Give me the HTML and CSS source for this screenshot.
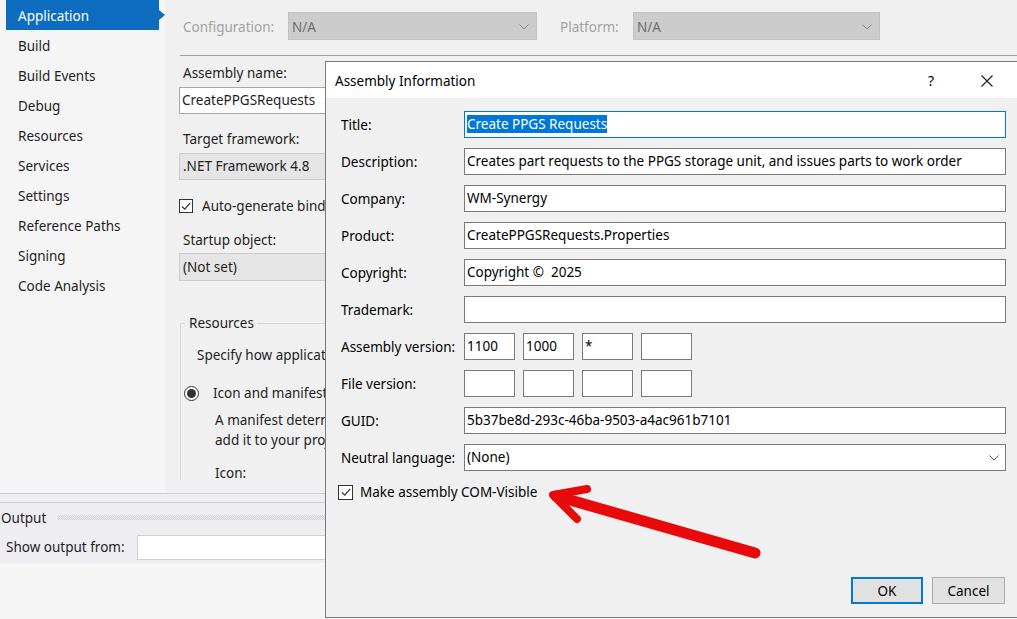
FILE: index.html
```html
<!DOCTYPE html>
<html lang="en">
<head>
<meta charset="utf-8">
<title>Assembly Information</title>
<link rel="stylesheet" href="styles.css">
</head>
<body>
<div class="page">
  <div class="designer">
    <nav class="sidebar">
      <div class="nav-item active">Application</div>
      <div class="nav-item">Build</div>
      <div class="nav-item">Build Events</div>
      <div class="nav-item">Debug</div>
      <div class="nav-item">Resources</div>
      <div class="nav-item">Services</div>
      <div class="nav-item">Settings</div>
      <div class="nav-item">Reference Paths</div>
      <div class="nav-item">Signing</div>
      <div class="nav-item">Code Analysis</div>
    </nav>
    <section class="main">
      <div class="config-row">
        <span class="cfg-label cfg-label-config">Configuration:</span>
        <div class="cfg-select cfg-select-config"><span>N/A</span><svg class="chev" width="10" height="6" viewBox="0 0 10 6"><polyline points="0.5,0.5 5,5 9.5,0.5" fill="none" stroke="#8a8a8a" stroke-width="1"/></svg></div>
        <span class="cfg-label cfg-label-platform">Platform:</span>
        <div class="cfg-select cfg-select-platform"><span>N/A</span><svg class="chev" width="10" height="6" viewBox="0 0 10 6"><polyline points="0.5,0.5 5,5 9.5,0.5" fill="none" stroke="#8a8a8a" stroke-width="1"/></svg></div>
      </div>
      <div class="separator"></div>
      <div class="form">
        <div class="field-label">Assembly name:</div>
        <div class="text-box">CreatePPGSRequests</div>
        <div class="field-label gap-lg">Target framework:</div>
        <div class="combo">.NET Framework 4.8</div>
        <div class="check-row"><span class="checkbox"><svg width="12" height="12" viewBox="0 0 12 12"><polyline points="2,6.5 4.8,9.2 10.2,2.8" fill="none" stroke="#333" stroke-width="1.2"/></svg></span><span class="clip-text">Auto-generate binding redirects</span></div>
        <div class="field-label gap-md">Startup object:</div>
        <div class="combo combo-tight">(Not set)</div>
        <fieldset class="group">
          <legend>Resources</legend>
          <div class="group-text">Specify how application resources will be managed:</div>
          <div class="radio-row"><span class="radio"><span class="radio-dot"></span></span><span class="clip-text">Icon and manifest</span></div>
          <div class="group-desc">A manifest determines specific settings for an application.</div>
          <div class="group-desc group-desc-2">add it to your project and then select it from the list below.</div>
          <div class="group-icon">Icon:</div>
        </fieldset>
      </div>
    </section>
  </div>
  <div class="output">
    <div class="output-splitter"></div>
    <div class="output-header"><span class="output-title">Output</span><div class="grip"></div></div>
    <div class="output-source"><span>Show output from:</span><div class="output-combo"></div></div>
  </div>

  <div class="dialog">
    <div class="dialog-titlebar">
      <span class="dialog-title">Assembly Information</span>
      <span class="dialog-help">?</span>
      <span class="dialog-close"><svg width="12" height="12" viewBox="0 0 12 12"><path d="M0.5 0.5 L11.5 11.5 M11.5 0.5 L0.5 11.5" stroke="#1a1a1a" stroke-width="1.1" fill="none"/></svg></span>
    </div>
    <div class="dialog-body">
      <div class="info-grid">
        <label class="info-label">Title:</label>
        <div class="info-box focused"><span class="selected">Create PPGS Requests</span></div>
        <label class="info-label">Description:</label>
        <div class="info-box">Creates part requests to the PPGS storage unit, and issues parts to work order</div>
        <label class="info-label">Company:</label>
        <div class="info-box">WM-Synergy</div>
        <label class="info-label">Product:</label>
        <div class="info-box">CreatePPGSRequests.Properties</div>
        <label class="info-label">Copyright:</label>
        <div class="info-box">Copyright ©&nbsp; 2025</div>
        <label class="info-label">Trademark:</label>
        <div class="info-box"></div>
        <label class="info-label">Assembly version:</label>
        <div class="version-row">
          <div class="info-box version-box">1100</div>
          <div class="info-box version-box">1000</div>
          <div class="info-box version-box">*</div>
          <div class="info-box version-box"></div>
        </div>
        <label class="info-label">File version:</label>
        <div class="version-row">
          <div class="info-box version-box"></div>
          <div class="info-box version-box"></div>
          <div class="info-box version-box"></div>
          <div class="info-box version-box"></div>
        </div>
        <label class="info-label">GUID:</label>
        <div class="info-box">5b37be8d-293c-46ba-9503-a4ac961b7101</div>
        <label class="info-label">Neutral language:</label>
        <div class="info-box info-combo"><span>(None)</span><svg class="chev" width="10" height="6" viewBox="0 0 10 6"><polyline points="0.5,0.5 5,5 9.5,0.5" fill="none" stroke="#555" stroke-width="1"/></svg></div>
      </div>
      <div class="com-row"><span class="checkbox"><svg width="12" height="12" viewBox="0 0 12 12"><polyline points="2,6.5 4.8,9.2 10.2,2.8" fill="none" stroke="#333" stroke-width="1.2"/></svg></span><span>Make assembly COM-Visible</span></div>
      <div class="button-row">
        <button class="btn btn-default">OK</button>
        <button class="btn btn-cancel">Cancel</button>
      </div>
    </div>
  </div>

  <svg class="arrow" width="1017" height="619" viewBox="0 0 1017 619">
    <line x1="755" y1="553" x2="556" y2="496" stroke="#e80a0a" stroke-width="11" stroke-linecap="round"/>
    <polyline points="587,489 553,495 577,519" fill="none" stroke="#e80a0a" stroke-width="8" stroke-linecap="round" stroke-linejoin="round"/>
  </svg>
</div>
</body>
</html>
```

FILE: styles.css
```css
* { box-sizing: border-box; }

html, body {
  margin: 0;
  padding: 0;
}

body {
  font-family: "Noto Sans", "Open Sans", sans-serif;
  font-size: 13.5px;
  color: #1e1e1e;
  background: #f5f5f5;
}

.page {
  position: relative;
  width: 1017px;
  height: 619px;
  overflow: hidden;
  background: #f5f5f5;
}

/* ---------- designer area ---------- */
.designer {
  display: flex;
  height: 493px;
}

.sidebar {
  width: 165px;
  flex: none;
  background: #f5f5f5;
  padding-left: 6px;
}

.nav-item {
  width: 153px;
  height: 30px;
  padding-top: 2px;
  line-height: 28px;
  padding-left: 12px;
  white-space: nowrap;
}

.nav-item.active {
  position: relative;
  background: #0c6dc0;
  color: #ffffff;
}

.nav-item.active::after {
  content: "";
  position: absolute;
  right: -6px;
  top: 10px;
  border-left: 6px solid #0c6dc0;
  border-top: 5px solid transparent;
  border-bottom: 5px solid transparent;
}

.main {
  flex: 1;
  background: #f0f0f0;
  padding-top: 12px;
  overflow: hidden;
}

.config-row {
  display: flex;
  align-items: center;
  height: 28px;
  padding-left: 14px;
  padding-top: 1px;
}

.cfg-label {
  color: #a2a2a2;
  padding-left: 4px;
  white-space: nowrap;
}

.cfg-label-config { width: 109px; }
.cfg-label-platform { width: 73px; margin-left: 23px; padding-left: 0; }

.cfg-select {
  height: 28px;
  margin-top: -1px;
  background: #cccccc;
  border: 1px solid #c2c2c2;
  display: flex;
  align-items: center;
  justify-content: space-between;
  padding: 1px 7px 0 3px;
  color: #6e6e6e;
}

.cfg-select-config { width: 249px; }
.cfg-select-platform { width: 247px; }

.chev { display: block; }

.separator {
  height: 1px;
  background: #a0a0a0;
  margin: 15px 0 0 15px;
}

.form {
  padding-left: 14px;
  width: 161px;
  overflow: hidden;
}

.field-label {
  line-height: 20px;
  margin-top: 7px;
  padding-left: 4px;
  white-space: nowrap;
}

.field-label.gap-lg { margin-top: 15px; }
.field-label.gap-md { margin-top: 14px; }

.text-box {
  margin-top: 4px;
  height: 27px;
  width: 147px;
  background: #ffffff;
  border: 1px solid #a8a8a8;
  border-right: 0;
  line-height: 25px;
  padding-left: 2px;
  white-space: nowrap;
  overflow: hidden;
}

.combo {
  margin-top: 4px;
  height: 27px;
  width: 147px;
  background: #e5e5e5;
  border: 1px solid #cccccc;
  border-right: 0;
  line-height: 25px;
  padding-left: 3px;
  white-space: nowrap;
  overflow: hidden;
}

.combo-tight {
  margin-top: 3px;
  height: 28px;
  line-height: 26px;
}

.check-row {
  margin-top: 16px;
  height: 20px;
  width: 147px;
  display: flex;
  align-items: center;
  gap: 9px;
  white-space: nowrap;
  overflow: hidden;
}

.clip-text {
  overflow: hidden;
  white-space: nowrap;
  min-width: 0;
  flex: 1;
}

.checkbox {
  width: 14px;
  height: 14px;
  flex: none;
  border: 1px solid #333333;
  background: #ffffff;
  display: flex;
  align-items: center;
  justify-content: center;
}

.checkbox svg { display: block; }

.group {
  margin: 32px 0 0 1px;
  padding: 0 0 0 16px;
  height: 167px;
  width: 146px;
  border: 1px solid #d8d8d8;
  border-right: 0;
  border-bottom: 0;
  min-width: 0;
}

.group legend {
  margin-left: -12px;
  padding: 0 3px 0 4px;
  line-height: 20px;
}

.group-text {
  margin-top: 12px;
  line-height: 20px;
  white-space: nowrap;
  overflow: hidden;
}

.radio-row {
  margin-top: 18px;
  margin-left: -13px;
  height: 20px;
  display: flex;
  align-items: center;
  gap: 14px;
  white-space: nowrap;
  overflow: hidden;
}

.radio {
  width: 15px;
  height: 15px;
  border: 1px solid #333333;
  border-radius: 50%;
  background: #ffffff;
  display: flex;
  align-items: center;
  justify-content: center;
  flex: none;
}

.radio-dot {
  width: 9px;
  height: 9px;
  border-radius: 50%;
  background: #333333;
}

.group-desc {
  margin-top: 7px;
  margin-left: 18px;
  line-height: 20px;
  white-space: nowrap;
  overflow: hidden;
}

.group-desc-2 { margin-top: 0; }

.group-icon {
  margin-top: 13px;
  margin-left: 18px;
  line-height: 20px;
}

/* ---------- output window ---------- */
.output {
  height: 70px;
  background: #eeeef2;
  border-top: 1px solid #cccedb;
}

.output-splitter {
  height: 9px;
  border-bottom: 1px solid #cccedb;
}

.output-header {
  height: 28px;
  display: flex;
  align-items: center;
  padding-left: 1px;
  padding-top: 1px;
}

.output-title {
  color: #1e1e1e;
  width: 56px;
}

.grip {
  width: 269px;
  height: 5px;
  background: repeating-conic-gradient(#cfcfd6 0 25%, transparent 0 50%) 0 0 / 2px 2px;
}

.output-source {
  height: 32px;
  display: flex;
  align-items: center;
  padding-left: 6px;
  gap: 12px;
}

.output-combo {
  width: 189px;
  height: 25px;
  background: #ffffff;
  border: 1px solid #cccedb;
  border-right: 0;
}

/* ---------- dialog ---------- */
.dialog {
  position: absolute;
  left: 325px;
  top: 61px;
  width: 700px;
  height: 557px;
  background: #f0f0f0;
  border: 1px solid #7a7a7a;
  color: #000000;
}

.dialog-titlebar {
  height: 36px;
  background: #ffffff;
  display: flex;
  align-items: center;
  padding-left: 9px;
  padding-top: 1px;
}

.dialog-title {
  flex: 1;
}

.dialog-help {
  width: 20px;
  text-align: center;
  margin-right: 40px;
  font-size: 14px;
}

.dialog-close {
  width: 12px;
  height: 12px;
  margin-right: 31px;
  display: flex;
}

.dialog-body {
  width: 680px;
  padding: 13px 0 0 15px;
}

.info-grid {
  display: grid;
  grid-template-columns: 123px 542px;
  grid-auto-rows: 27px;
  row-gap: 10px;
}

.info-label {
  display: flex;
  align-items: center;
  white-space: nowrap;
}

.info-box {
  height: 27px;
  background: #ffffff;
  border: 1px solid #7a7a7a;
  line-height: 25px;
  padding-left: 2px;
  white-space: nowrap;
  overflow: hidden;
}

.info-box.focused {
  border-color: #0078d7;
}

.selected {
  background: #0078d7;
  color: #ffffff;
}

.version-row {
  display: flex;
  gap: 8px;
}

.version-box {
  width: 51px;
}

.info-combo {
  display: flex;
  align-items: center;
  justify-content: space-between;
  padding-right: 6px;
}

.com-row {
  margin-top: 11px;
  margin-left: -3px;
  height: 20px;
  display: flex;
  align-items: center;
  gap: 7px;
  white-space: nowrap;
}

.com-row .checkbox {
  width: 15px;
  height: 15px;
}

.button-row {
  display: flex;
  justify-content: flex-end;
  gap: 9px;
  margin-top: 75px;
  width: 664px;
}

.btn {
  font-family: inherit;
  font-size: 13.5px;
  color: #000000;
  height: 27px;
  background: #e1e1e1;
  border: 1px solid #adadad;
  padding: 0;
  margin: 0;
}

.btn-default {
  width: 72px;
  border: 2px solid #0078d7;
}

.btn-cancel {
  width: 73px;
}

/* ---------- annotation ---------- */
.arrow {
  position: absolute;
  left: 0;
  top: 0;
  pointer-events: none;
}
```
